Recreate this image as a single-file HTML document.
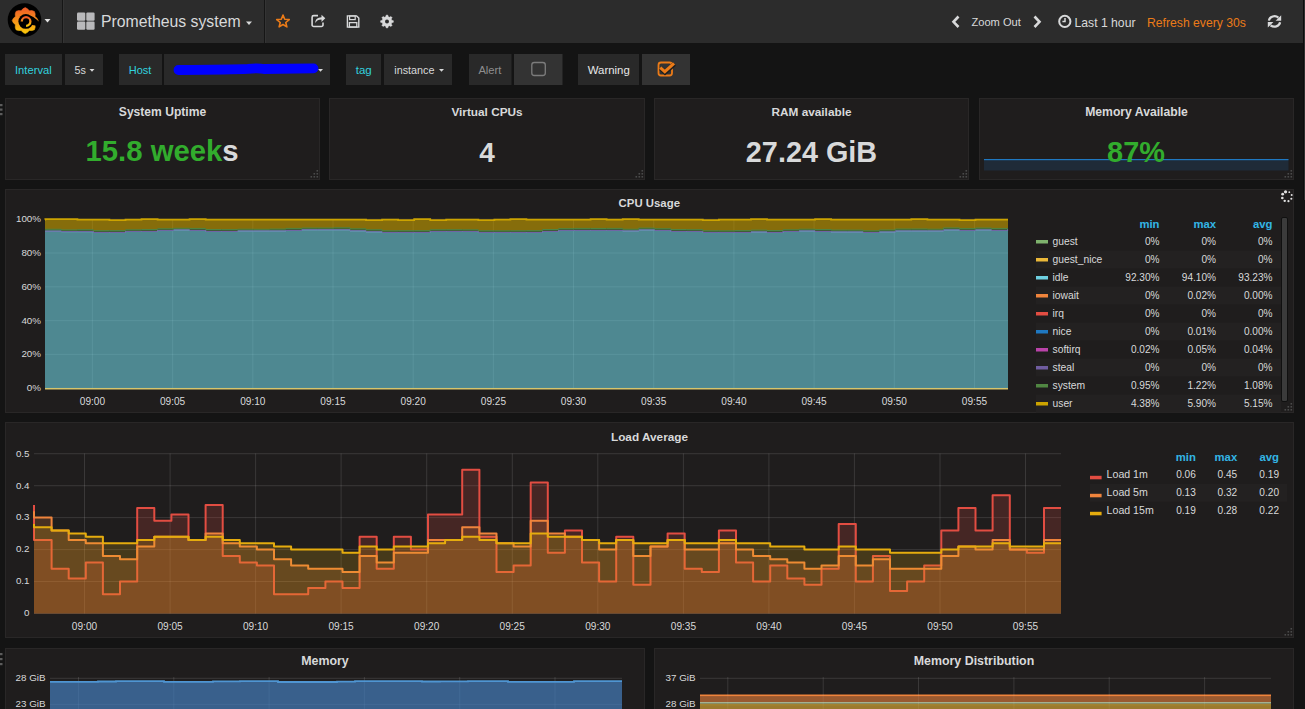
<!DOCTYPE html>
<html><head><meta charset="utf-8"><title>Prometheus system - Grafana</title>
<style>html,body{margin:0;padding:0;background:#161616;width:1305px;height:709px;overflow:hidden}
text{font-family:"Liberation Sans",sans-serif}</style></head>
<body><svg width="1305" height="709" viewBox="0 0 1305 709" font-family="Liberation Sans, sans-serif" style="display:block"><rect x="0" y="0" width="1305" height="709" fill="#141414"/>
<rect x="0" y="0" width="1305" height="43" fill="#2c2c2c"/>
<rect x="62" y="0" width="1" height="43" fill="#161616"/><rect x="63" y="0" width="1" height="43" fill="#343434"/>
<rect x="264" y="0" width="1" height="43" fill="#161616"/><rect x="265" y="0" width="1" height="43" fill="#343434"/>
<circle cx="24.5" cy="20" r="16.8" fill="#000"/>
<defs><linearGradient id="lg" x1="0" y1="0" x2="0" y2="1"><stop offset="0" stop-color="#f05a28"/><stop offset="1" stop-color="#fbca0a"/></linearGradient></defs>
<polygon points="25.20,7.60 27.54,8.83 29.26,10.81 31.87,10.62 34.39,11.41 35.18,13.93 34.99,16.54 36.97,18.26 38.20,20.60 36.97,22.94 34.99,24.66 35.18,27.27 34.39,29.79 31.87,30.58 29.26,30.39 27.54,32.37 25.20,33.60 22.86,32.37 21.14,30.39 18.53,30.58 16.01,29.79 15.22,27.27 15.41,24.66 13.43,22.94 12.20,20.60 13.43,18.26 15.41,16.54 15.22,13.93 16.01,11.41 18.53,10.62 21.14,10.81 22.86,8.83" fill="url(#lg)" stroke="url(#lg)" stroke-width="0.6" stroke-linejoin="round"/>
<circle cx="25.8" cy="21.4" r="7.4" fill="#000"/>
<path d="M29.5 15.2 Q35 17 37.8 20.5 L39 26 L32 25 Z" fill="#000"/>
<path d="M21.8 21.5 a4.3 4.3 0 1 1 4.3 4.3" fill="none" stroke="url(#lg)" stroke-width="2.3"/>
<path d="M44.5 19 L50.5 19 L47.5 22.5 Z" fill="#e3e3e3"/>
<rect x="77" y="12.5" width="8.3" height="8.3" rx="1.2" fill="#b9b9bb"/>
<rect x="86.3" y="12.5" width="8.3" height="8.3" rx="1.2" fill="#b9b9bb"/>
<rect x="77" y="21.5" width="8.3" height="8.3" rx="1.2" fill="#b9b9bb"/>
<rect x="86.3" y="21.5" width="8.3" height="8.3" rx="1.2" fill="#b9b9bb"/>
<text x="101" y="26.7" font-size="15.8" fill="#d8d9da" text-anchor="start" font-weight="normal" >Prometheus system</text>
<path d="M246 21.5 L252 21.5 L249 25 Z" fill="#d8d9da"/>
<polygon points="283.00,15.00 284.70,19.25 289.28,19.56 285.76,22.50 286.88,26.94 283.00,24.50 279.12,26.94 280.24,22.50 276.72,19.56 281.30,19.25" fill="none" stroke="#eb7b18" stroke-width="1.6" stroke-linejoin="round"/>
<path d="M318 15.6 h-4.3 a1.6 1.6 0 0 0 -1.6 1.6 v7.7 a1.6 1.6 0 0 0 1.6 1.6 h7.7 a1.6 1.6 0 0 0 1.6 -1.6 v-2.3" fill="none" stroke="#d8d9da" stroke-width="1.6"/>
<path d="M315.2 23 c0.2-3.6 2.3-5.6 6.3-5.7 v-2.6 l3.8 3.6 -3.8 3.6 v-2.4 c-2.9 0 -4.9 1 -6.3 3.5z" fill="#d8d9da"/>
<path d="M347.4 15.9 h9.2 l2.2 2.2 v9 h-11.4 z" fill="none" stroke="#d8d9da" stroke-width="1.4"/>
<rect x="349.6" y="16" width="5.6" height="3.6" fill="none" stroke="#d8d9da" stroke-width="1.2"/>
<rect x="349.4" y="22.6" width="7.4" height="4.4" fill="none" stroke="#d8d9da" stroke-width="1.3"/>
<polygon points="393.40,21.50 393.35,22.34 391.73,22.77 391.53,23.38 391.24,23.95 392.08,25.40 391.53,26.03 390.90,26.58 389.45,25.74 388.88,26.03 388.27,26.23 387.84,27.85 387.00,27.90 386.16,27.85 385.73,26.23 385.12,26.03 384.55,25.74 383.10,26.58 382.47,26.03 381.92,25.40 382.76,23.95 382.47,23.38 382.27,22.77 380.65,22.34 380.60,21.50 380.65,20.66 382.27,20.23 382.47,19.62 382.76,19.05 381.92,17.60 382.47,16.97 383.10,16.42 384.55,17.26 385.12,16.97 385.73,16.77 386.16,15.15 387.00,15.10 387.84,15.15 388.27,16.77 388.88,16.97 389.45,17.26 390.90,16.42 391.53,16.97 392.08,17.60 391.24,19.05 391.53,19.62 391.73,20.23 393.35,20.66" fill="#d8d9da" stroke="#d8d9da" stroke-width="0.5" stroke-linejoin="round"/>
<circle cx="387" cy="21.5" r="2.0" fill="#2c2c2c"/>
<path d="M958.5 16.5 L953.5 21.8 L958.5 27" fill="none" stroke="#d8d9da" stroke-width="2.6"/>
<text x="971.5" y="26.2" font-size="11.1" fill="#d8d9da" text-anchor="start" font-weight="normal" >Zoom Out</text>
<path d="M1034.5 16.5 L1039.5 21.8 L1034.5 27" fill="none" stroke="#d8d9da" stroke-width="2.6"/>
<circle cx="1064.8" cy="21.4" r="5.6" fill="none" stroke="#d8d9da" stroke-width="2"/>
<path d="M1065 18 v3.6 h-2.6" fill="none" stroke="#d8d9da" stroke-width="1.5"/>
<text x="1074.5" y="26.7" font-size="12.2" fill="#d8d9da" text-anchor="start" font-weight="normal" >Last 1 hour</text>
<text x="1147" y="26.7" font-size="12.2" fill="#eb7b18" text-anchor="start" font-weight="normal" >Refresh every 30s</text>
<path d="M1268.9 20.6 A5.7 5.2 0 0 1 1278.4 17.6" fill="none" stroke="#d8d9da" stroke-width="2.2"/>
<path d="M1281.2 15.2 V20.8 H1275.6 Z" fill="#d8d9da"/>
<path d="M1280.1 22.3 A5.7 5.2 0 0 1 1270.6 25.3" fill="none" stroke="#d8d9da" stroke-width="2.2"/>
<path d="M1267.8 27.6 V22 H1273.4 Z" fill="#d8d9da"/>
<rect x="5" y="54" width="57" height="31" fill="#292929"/>
<text x="15" y="74" font-size="11.2" fill="#32d1df" text-anchor="start" font-weight="normal" >Interval</text>
<rect x="65" y="54" width="38" height="31" fill="#292929"/>
<text x="74.5" y="74" font-size="10.8" fill="#d8d9da" text-anchor="start" font-weight="normal" >5s</text>
<path d="M89.5 69 L94.5 69 L92 71.8 Z" fill="#d8d9da"/>
<rect x="119" y="54" width="43" height="31" fill="#292929"/>
<text x="128.8" y="74" font-size="11" fill="#32d1df" text-anchor="start" font-weight="normal" >Host</text>
<rect x="164" y="54" width="166" height="31" fill="#292929"/>
<path d="M318 69 L323 69 L320.5 71.8 Z" fill="#d8d9da"/>
<path d="M178.5 70 C 205 69.8, 232 69.6, 248 68.9 C 254 68.2, 259 68, 264 69 C 285 68.9, 300 68.5, 313.5 68.4" fill="none" stroke="#0000ff" stroke-width="9.8" stroke-linecap="round"/>
<rect x="346" y="54" width="35" height="31" fill="#292929"/>
<text x="355.7" y="74" font-size="11.5" fill="#32d1df" text-anchor="start" font-weight="normal" >tag</text>
<rect x="384" y="54" width="68" height="31" fill="#292929"/>
<text x="394.3" y="74" font-size="10.8" fill="#d8d9da" text-anchor="start" font-weight="normal" >instance</text>
<path d="M439 69 L444 69 L441.5 71.8 Z" fill="#d8d9da"/>
<rect x="469" y="54" width="42.5" height="31" fill="#292929"/>
<text x="478.4" y="74" font-size="11.2" fill="#8e8e8e" text-anchor="start" font-weight="normal" >Alert</text>
<rect x="514" y="54" width="48.5" height="31" fill="#333333"/>
<rect x="531.8" y="62.5" width="13.5" height="13" rx="2.5" fill="none" stroke="#7c7c7c" stroke-width="1.3"/>
<rect x="578" y="54" width="61" height="31" fill="#292929"/>
<text x="587.8" y="74" font-size="11.4" fill="#e8e8e8" text-anchor="start" font-weight="normal" >Warning</text>
<rect x="642" y="54" width="48" height="31" fill="#333333"/>
<rect x="658.5" y="62.5" width="13.5" height="13" rx="2.5" fill="none" stroke="#eb7b18" stroke-width="1.8"/>
<path d="M660.6 68.4 L665 72.4 L674.4 64" fill="none" stroke="#1e1e1e" stroke-width="4.6"/>
<path d="M660.3 67.6 L664.8 71.6 L674 63.4" fill="none" stroke="#eb7b18" stroke-width="3.1"/>
<rect x="5.5" y="98.5" width="314" height="81" fill="#1f1d1d" stroke="#292727" stroke-width="1"/>
<rect x="316.5" y="176" width="1.6" height="1.6" fill="#4a4a4a"/>
<rect x="313.5" y="176" width="1.6" height="1.6" fill="#4a4a4a"/>
<rect x="310.5" y="176" width="1.6" height="1.6" fill="#4a4a4a"/>
<rect x="316.5" y="173" width="1.6" height="1.6" fill="#4a4a4a"/>
<rect x="313.5" y="173" width="1.6" height="1.6" fill="#4a4a4a"/>
<rect x="316.5" y="170" width="1.6" height="1.6" fill="#4a4a4a"/>
<text x="162.5" y="116" font-size="12.1" fill="#d8d9da" text-anchor="middle" font-weight="bold" >System Uptime</text>
<rect x="329.5" y="98.5" width="315" height="81" fill="#1f1d1d" stroke="#292727" stroke-width="1"/>
<rect x="641.5" y="176" width="1.6" height="1.6" fill="#4a4a4a"/>
<rect x="638.5" y="176" width="1.6" height="1.6" fill="#4a4a4a"/>
<rect x="635.5" y="176" width="1.6" height="1.6" fill="#4a4a4a"/>
<rect x="641.5" y="173" width="1.6" height="1.6" fill="#4a4a4a"/>
<rect x="638.5" y="173" width="1.6" height="1.6" fill="#4a4a4a"/>
<rect x="641.5" y="170" width="1.6" height="1.6" fill="#4a4a4a"/>
<text x="487.0" y="116" font-size="11.8" fill="#d8d9da" text-anchor="middle" font-weight="bold" >Virtual CPUs</text>
<rect x="654.5" y="98.5" width="314" height="81" fill="#1f1d1d" stroke="#292727" stroke-width="1"/>
<rect x="965.5" y="176" width="1.6" height="1.6" fill="#4a4a4a"/>
<rect x="962.5" y="176" width="1.6" height="1.6" fill="#4a4a4a"/>
<rect x="959.5" y="176" width="1.6" height="1.6" fill="#4a4a4a"/>
<rect x="965.5" y="173" width="1.6" height="1.6" fill="#4a4a4a"/>
<rect x="962.5" y="173" width="1.6" height="1.6" fill="#4a4a4a"/>
<rect x="965.5" y="170" width="1.6" height="1.6" fill="#4a4a4a"/>
<text x="811.5" y="116" font-size="11.8" fill="#d8d9da" text-anchor="middle" font-weight="bold" >RAM available</text>
<rect x="979.5" y="98.5" width="314" height="81" fill="#1f1d1d" stroke="#292727" stroke-width="1"/>
<rect x="1290.5" y="176" width="1.6" height="1.6" fill="#4a4a4a"/>
<rect x="1287.5" y="176" width="1.6" height="1.6" fill="#4a4a4a"/>
<rect x="1284.5" y="176" width="1.6" height="1.6" fill="#4a4a4a"/>
<rect x="1290.5" y="173" width="1.6" height="1.6" fill="#4a4a4a"/>
<rect x="1287.5" y="173" width="1.6" height="1.6" fill="#4a4a4a"/>
<rect x="1290.5" y="170" width="1.6" height="1.6" fill="#4a4a4a"/>
<text x="1136.5" y="116" font-size="12.2" fill="#d8d9da" text-anchor="middle" font-weight="bold" >Memory Available</text>
<rect x="984" y="159.5" width="304.5" height="11" fill="#1f2b38"/>
<rect x="984" y="159" width="304.5" height="1.2" fill="#1f78c1"/>
<text x="85.5" y="160.7" font-size="29.3" fill="#d8d9da" text-anchor="start" font-weight="bold" ><tspan fill="#32ac2d">15.8 week</tspan>s</text>
<text x="487" y="161.5" font-size="28" fill="#d8d9da" text-anchor="middle" font-weight="bold" >4</text>
<text x="811.5" y="161.5" font-size="28.8" fill="#d8d9da" text-anchor="middle" font-weight="bold" >27.24 GiB</text>
<text x="1136" y="161.5" font-size="28.9" fill="#32ac2d" text-anchor="middle" font-weight="bold" >87%</text>
<rect x="5.5" y="189.5" width="1288" height="223" fill="#1f1d1d" stroke="#292727" stroke-width="1"/>
<rect x="1290.5" y="409" width="1.6" height="1.6" fill="#4a4a4a"/>
<rect x="1287.5" y="409" width="1.6" height="1.6" fill="#4a4a4a"/>
<rect x="1284.5" y="409" width="1.6" height="1.6" fill="#4a4a4a"/>
<rect x="1290.5" y="406" width="1.6" height="1.6" fill="#4a4a4a"/>
<rect x="1287.5" y="406" width="1.6" height="1.6" fill="#4a4a4a"/>
<rect x="1290.5" y="403" width="1.6" height="1.6" fill="#4a4a4a"/>
<text x="649.3" y="206.6" font-size="11.4" fill="#d8d9da" text-anchor="middle" font-weight="bold" >CPU Usage</text>
<circle cx="1285.55" cy="191.82" r="1.6" fill="#e0e0e0"/>
<circle cx="1289.29" cy="192.17" r="0.9" fill="#e0e0e0"/>
<circle cx="1291.68" cy="195.05" r="1.0" fill="#e0e0e0"/>
<circle cx="1291.33" cy="198.79" r="1.05" fill="#e0e0e0"/>
<circle cx="1288.45" cy="201.18" r="1.1" fill="#e0e0e0"/>
<circle cx="1284.71" cy="200.83" r="1.2" fill="#e0e0e0"/>
<circle cx="1282.32" cy="197.95" r="1.3" fill="#e0e0e0"/>
<circle cx="1282.67" cy="194.21" r="1.4" fill="#e0e0e0"/>
<rect x="45" y="387.7" width="963" height="1" fill="rgba(255,255,255,0.12)"/>
<rect x="45" y="353.9" width="963" height="1" fill="rgba(255,255,255,0.12)"/>
<rect x="45" y="320.1" width="963" height="1" fill="rgba(255,255,255,0.12)"/>
<rect x="45" y="286.3" width="963" height="1" fill="rgba(255,255,255,0.12)"/>
<rect x="45" y="252.5" width="963" height="1" fill="rgba(255,255,255,0.12)"/>
<rect x="45" y="218.7" width="963" height="1" fill="rgba(255,255,255,0.12)"/>
<rect x="91.9" y="219" width="1" height="170" fill="rgba(255,255,255,0.12)"/>
<text x="92.4" y="404.5" font-size="10.1" fill="#d8d9da" text-anchor="middle" font-weight="normal" >09:00</text>
<rect x="172.1" y="219" width="1" height="170" fill="rgba(255,255,255,0.12)"/>
<text x="172.6" y="404.5" font-size="10.1" fill="#d8d9da" text-anchor="middle" font-weight="normal" >09:05</text>
<rect x="252.3" y="219" width="1" height="170" fill="rgba(255,255,255,0.12)"/>
<text x="252.8" y="404.5" font-size="10.1" fill="#d8d9da" text-anchor="middle" font-weight="normal" >09:10</text>
<rect x="332.5" y="219" width="1" height="170" fill="rgba(255,255,255,0.12)"/>
<text x="333.0" y="404.5" font-size="10.1" fill="#d8d9da" text-anchor="middle" font-weight="normal" >09:15</text>
<rect x="412.7" y="219" width="1" height="170" fill="rgba(255,255,255,0.12)"/>
<text x="413.2" y="404.5" font-size="10.1" fill="#d8d9da" text-anchor="middle" font-weight="normal" >09:20</text>
<rect x="492.9" y="219" width="1" height="170" fill="rgba(255,255,255,0.12)"/>
<text x="493.4" y="404.5" font-size="10.1" fill="#d8d9da" text-anchor="middle" font-weight="normal" >09:25</text>
<rect x="573.0" y="219" width="1" height="170" fill="rgba(255,255,255,0.12)"/>
<text x="573.5" y="404.5" font-size="10.1" fill="#d8d9da" text-anchor="middle" font-weight="normal" >09:30</text>
<rect x="653.2" y="219" width="1" height="170" fill="rgba(255,255,255,0.12)"/>
<text x="653.7" y="404.5" font-size="10.1" fill="#d8d9da" text-anchor="middle" font-weight="normal" >09:35</text>
<rect x="733.4" y="219" width="1" height="170" fill="rgba(255,255,255,0.12)"/>
<text x="733.9" y="404.5" font-size="10.1" fill="#d8d9da" text-anchor="middle" font-weight="normal" >09:40</text>
<rect x="813.6" y="219" width="1" height="170" fill="rgba(255,255,255,0.12)"/>
<text x="814.1" y="404.5" font-size="10.1" fill="#d8d9da" text-anchor="middle" font-weight="normal" >09:45</text>
<rect x="893.8" y="219" width="1" height="170" fill="rgba(255,255,255,0.12)"/>
<text x="894.3" y="404.5" font-size="10.1" fill="#d8d9da" text-anchor="middle" font-weight="normal" >09:50</text>
<rect x="974.0" y="219" width="1" height="170" fill="rgba(255,255,255,0.12)"/>
<text x="974.5" y="404.5" font-size="10.1" fill="#d8d9da" text-anchor="middle" font-weight="normal" >09:55</text>
<text x="41" y="391.09999999999997" font-size="9.8" fill="#d8d9da" text-anchor="end" font-weight="normal" >0%</text>
<text x="41" y="357.29999999999995" font-size="9.8" fill="#d8d9da" text-anchor="end" font-weight="normal" >20%</text>
<text x="41" y="323.5" font-size="9.8" fill="#d8d9da" text-anchor="end" font-weight="normal" >40%</text>
<text x="41" y="289.7" font-size="9.8" fill="#d8d9da" text-anchor="end" font-weight="normal" >60%</text>
<text x="41" y="255.9" font-size="9.8" fill="#d8d9da" text-anchor="end" font-weight="normal" >80%</text>
<text x="41" y="222.1" font-size="9.8" fill="#d8d9da" text-anchor="end" font-weight="normal" >100%</text>
<path d="M45.0,231.19 L45.3,231.19 L45.3,231.19 L61.3,231.19 L61.3,231.70 L77.4,231.70 L77.4,231.70 L93.4,231.70 L93.4,232.54 L109.4,232.54 L109.4,232.54 L125.5,232.54 L125.5,231.53 L141.5,231.53 L141.5,231.53 L157.6,231.53 L157.6,230.52 L173.6,230.52 L173.6,230.01 L189.6,230.01 L189.6,230.52 L205.7,230.52 L205.7,231.53 L221.7,231.53 L221.7,231.53 L237.7,231.53 L237.7,231.02 L253.8,231.02 L253.8,231.02 L269.8,231.02 L269.8,231.02 L285.9,231.02 L285.9,230.52 L301.9,230.52 L301.9,229.84 L317.9,229.84 L317.9,229.84 L334.0,229.84 L334.0,229.84 L350.0,229.84 L350.0,230.85 L366.0,230.85 L366.0,231.87 L382.1,231.87 L382.1,232.54 L398.1,232.54 L398.1,232.54 L414.2,232.54 L414.2,232.54 L430.2,232.54 L430.2,231.53 L446.2,231.53 L446.2,231.53 L462.3,231.53 L462.3,231.53 L478.3,231.53 L478.3,232.54 L494.4,232.54 L494.4,232.54 L510.4,232.54 L510.4,232.54 L526.4,232.54 L526.4,232.54 L542.5,232.54 L542.5,231.53 L558.5,231.53 L558.5,230.52 L574.5,230.52 L574.5,230.52 L590.6,230.52 L590.6,230.52 L606.6,230.52 L606.6,230.52 L622.7,230.52 L622.7,231.02 L638.7,231.02 L638.7,230.01 L654.7,230.01 L654.7,230.52 L670.8,230.52 L670.8,231.53 L686.8,231.53 L686.8,231.53 L702.8,231.53 L702.8,232.54 L718.9,232.54 L718.9,232.54 L734.9,232.54 L734.9,232.54 L751.0,232.54 L751.0,232.04 L767.0,232.04 L767.0,232.54 L783.0,232.54 L783.0,231.53 L799.1,231.53 L799.1,231.02 L815.1,231.02 L815.1,231.53 L831.1,231.53 L831.1,232.04 L847.2,232.04 L847.2,232.04 L863.2,232.04 L863.2,232.54 L879.3,232.54 L879.3,232.04 L895.3,232.04 L895.3,231.02 L911.3,231.02 L911.3,231.02 L927.4,231.02 L927.4,231.02 L943.4,231.02 L943.4,230.01 L959.5,230.01 L959.5,230.52 L975.5,230.52 L975.5,230.01 L991.5,230.01 L991.5,230.52 L1007.6,230.52 L1007.6,229.84 L1008.0,229.84 L1008.0,388.70 L1007.6,388.70 L1007.6,388.70 L991.5,388.70 L991.5,388.70 L975.5,388.70 L975.5,388.70 L959.5,388.70 L959.5,388.70 L943.4,388.70 L943.4,388.70 L927.4,388.70 L927.4,388.70 L911.3,388.70 L911.3,388.70 L895.3,388.70 L895.3,388.70 L879.3,388.70 L879.3,388.70 L863.2,388.70 L863.2,388.70 L847.2,388.70 L847.2,388.70 L831.1,388.70 L831.1,388.70 L815.1,388.70 L815.1,388.70 L799.1,388.70 L799.1,388.70 L783.0,388.70 L783.0,388.70 L767.0,388.70 L767.0,388.70 L751.0,388.70 L751.0,388.70 L734.9,388.70 L734.9,388.70 L718.9,388.70 L718.9,388.70 L702.8,388.70 L702.8,388.70 L686.8,388.70 L686.8,388.70 L670.8,388.70 L670.8,388.70 L654.7,388.70 L654.7,388.70 L638.7,388.70 L638.7,388.70 L622.7,388.70 L622.7,388.70 L606.6,388.70 L606.6,388.70 L590.6,388.70 L590.6,388.70 L574.5,388.70 L574.5,388.70 L558.5,388.70 L558.5,388.70 L542.5,388.70 L542.5,388.70 L526.4,388.70 L526.4,388.70 L510.4,388.70 L510.4,388.70 L494.4,388.70 L494.4,388.70 L478.3,388.70 L478.3,388.70 L462.3,388.70 L462.3,388.70 L446.2,388.70 L446.2,388.70 L430.2,388.70 L430.2,388.70 L414.2,388.70 L414.2,388.70 L398.1,388.70 L398.1,388.70 L382.1,388.70 L382.1,388.70 L366.0,388.70 L366.0,388.70 L350.0,388.70 L350.0,388.70 L334.0,388.70 L334.0,388.70 L317.9,388.70 L317.9,388.70 L301.9,388.70 L301.9,388.70 L285.9,388.70 L285.9,388.70 L269.8,388.70 L269.8,388.70 L253.8,388.70 L253.8,388.70 L237.7,388.70 L237.7,388.70 L221.7,388.70 L221.7,388.70 L205.7,388.70 L205.7,388.70 L189.6,388.70 L189.6,388.70 L173.6,388.70 L173.6,388.70 L157.6,388.70 L157.6,388.70 L141.5,388.70 L141.5,388.70 L125.5,388.70 L125.5,388.70 L109.4,388.70 L109.4,388.70 L93.4,388.70 L93.4,388.70 L77.4,388.70 L77.4,388.70 L61.3,388.70 L61.3,388.70 L45.3,388.70 L45.3,388.70 L45.0,388.70 Z" fill="#6ED0E0" fill-opacity="0.6"/>
<path d="M45.0,231.11 L45.3,231.11 L45.3,231.11 L61.3,231.11 L61.3,231.61 L77.4,231.61 L77.4,231.61 L93.4,231.61 L93.4,232.46 L109.4,232.46 L109.4,232.46 L125.5,232.46 L125.5,231.45 L141.5,231.45 L141.5,231.45 L157.6,231.45 L157.6,230.43 L173.6,230.43 L173.6,229.92 L189.6,229.92 L189.6,230.43 L205.7,230.43 L205.7,231.45 L221.7,231.45 L221.7,231.45 L237.7,231.45 L237.7,230.94 L253.8,230.94 L253.8,230.94 L269.8,230.94 L269.8,230.94 L285.9,230.94 L285.9,230.43 L301.9,230.43 L301.9,229.76 L317.9,229.76 L317.9,229.76 L334.0,229.76 L334.0,229.76 L350.0,229.76 L350.0,230.77 L366.0,230.77 L366.0,231.78 L382.1,231.78 L382.1,232.46 L398.1,232.46 L398.1,232.46 L414.2,232.46 L414.2,232.46 L430.2,232.46 L430.2,231.45 L446.2,231.45 L446.2,231.45 L462.3,231.45 L462.3,231.45 L478.3,231.45 L478.3,232.46 L494.4,232.46 L494.4,232.46 L510.4,232.46 L510.4,232.46 L526.4,232.46 L526.4,232.46 L542.5,232.46 L542.5,231.45 L558.5,231.45 L558.5,230.43 L574.5,230.43 L574.5,230.43 L590.6,230.43 L590.6,230.43 L606.6,230.43 L606.6,230.43 L622.7,230.43 L622.7,230.94 L638.7,230.94 L638.7,229.92 L654.7,229.92 L654.7,230.43 L670.8,230.43 L670.8,231.45 L686.8,231.45 L686.8,231.45 L702.8,231.45 L702.8,232.46 L718.9,232.46 L718.9,232.46 L734.9,232.46 L734.9,232.46 L751.0,232.46 L751.0,231.95 L767.0,231.95 L767.0,232.46 L783.0,232.46 L783.0,231.45 L799.1,231.45 L799.1,230.94 L815.1,230.94 L815.1,231.45 L831.1,231.45 L831.1,231.95 L847.2,231.95 L847.2,231.95 L863.2,231.95 L863.2,232.46 L879.3,232.46 L879.3,231.95 L895.3,231.95 L895.3,230.94 L911.3,230.94 L911.3,230.94 L927.4,230.94 L927.4,230.94 L943.4,230.94 L943.4,229.92 L959.5,229.92 L959.5,230.43 L975.5,230.43 L975.5,229.92 L991.5,229.92 L991.5,230.43 L1007.6,230.43 L1007.6,229.76 L1008.0,229.76 L1008.0,229.84 L1007.6,229.84 L1007.6,230.52 L991.5,230.52 L991.5,230.01 L975.5,230.01 L975.5,230.52 L959.5,230.52 L959.5,230.01 L943.4,230.01 L943.4,231.02 L927.4,231.02 L927.4,231.02 L911.3,231.02 L911.3,231.02 L895.3,231.02 L895.3,232.04 L879.3,232.04 L879.3,232.54 L863.2,232.54 L863.2,232.04 L847.2,232.04 L847.2,232.04 L831.1,232.04 L831.1,231.53 L815.1,231.53 L815.1,231.02 L799.1,231.02 L799.1,231.53 L783.0,231.53 L783.0,232.54 L767.0,232.54 L767.0,232.04 L751.0,232.04 L751.0,232.54 L734.9,232.54 L734.9,232.54 L718.9,232.54 L718.9,232.54 L702.8,232.54 L702.8,231.53 L686.8,231.53 L686.8,231.53 L670.8,231.53 L670.8,230.52 L654.7,230.52 L654.7,230.01 L638.7,230.01 L638.7,231.02 L622.7,231.02 L622.7,230.52 L606.6,230.52 L606.6,230.52 L590.6,230.52 L590.6,230.52 L574.5,230.52 L574.5,230.52 L558.5,230.52 L558.5,231.53 L542.5,231.53 L542.5,232.54 L526.4,232.54 L526.4,232.54 L510.4,232.54 L510.4,232.54 L494.4,232.54 L494.4,232.54 L478.3,232.54 L478.3,231.53 L462.3,231.53 L462.3,231.53 L446.2,231.53 L446.2,231.53 L430.2,231.53 L430.2,232.54 L414.2,232.54 L414.2,232.54 L398.1,232.54 L398.1,232.54 L382.1,232.54 L382.1,231.87 L366.0,231.87 L366.0,230.85 L350.0,230.85 L350.0,229.84 L334.0,229.84 L334.0,229.84 L317.9,229.84 L317.9,229.84 L301.9,229.84 L301.9,230.52 L285.9,230.52 L285.9,231.02 L269.8,231.02 L269.8,231.02 L253.8,231.02 L253.8,231.02 L237.7,231.02 L237.7,231.53 L221.7,231.53 L221.7,231.53 L205.7,231.53 L205.7,230.52 L189.6,230.52 L189.6,230.01 L173.6,230.01 L173.6,230.52 L157.6,230.52 L157.6,231.53 L141.5,231.53 L141.5,231.53 L125.5,231.53 L125.5,232.54 L109.4,232.54 L109.4,232.54 L93.4,232.54 L93.4,231.70 L77.4,231.70 L77.4,231.70 L61.3,231.70 L61.3,231.19 L45.3,231.19 L45.3,231.19 L45.0,231.19 Z" fill="#BA43A9" fill-opacity="0.6"/>
<path d="M45.0,229.13 L45.3,229.13 L45.3,229.28 L61.3,229.28 L61.3,229.92 L77.4,229.92 L77.4,229.74 L93.4,229.74 L93.4,230.66 L109.4,230.66 L109.4,230.62 L125.5,230.62 L125.5,229.81 L141.5,229.81 L141.5,229.56 L157.6,229.56 L157.6,228.75 L173.6,228.75 L173.6,228.28 L189.6,228.28 L189.6,228.45 L205.7,228.45 L205.7,229.51 L221.7,229.51 L221.7,229.58 L237.7,229.58 L237.7,229.22 L253.8,229.22 L253.8,229.31 L269.8,229.31 L269.8,229.05 L285.9,229.05 L285.9,228.41 L301.9,228.41 L301.9,228.03 L317.9,228.03 L317.9,228.02 L334.0,228.02 L334.0,227.82 L350.0,227.82 L350.0,228.80 L366.0,228.80 L366.0,229.77 L382.1,229.77 L382.1,230.75 L398.1,230.75 L398.1,230.68 L414.2,230.68 L414.2,230.67 L430.2,230.67 L430.2,229.74 L446.2,229.74 L446.2,229.69 L462.3,229.69 L462.3,229.82 L478.3,229.82 L478.3,230.78 L494.4,230.78 L494.4,230.83 L510.4,230.83 L510.4,230.77 L526.4,230.77 L526.4,230.66 L542.5,230.66 L542.5,229.51 L558.5,229.51 L558.5,228.65 L574.5,228.65 L574.5,228.41 L590.6,228.41 L590.6,228.46 L606.6,228.46 L606.6,228.40 L622.7,228.40 L622.7,229.24 L638.7,229.24 L638.7,228.07 L654.7,228.07 L654.7,228.72 L670.8,228.72 L670.8,229.51 L686.8,229.51 L686.8,229.67 L702.8,229.67 L702.8,230.75 L718.9,230.75 L718.9,230.83 L734.9,230.83 L734.9,230.58 L751.0,230.58 L751.0,230.13 L767.0,230.13 L767.0,230.49 L783.0,230.49 L783.0,229.76 L799.1,229.76 L799.1,229.21 L815.1,229.21 L815.1,229.52 L831.1,229.52 L831.1,230.05 L847.2,230.05 L847.2,230.09 L863.2,230.09 L863.2,230.79 L879.3,230.79 L879.3,229.94 L895.3,229.94 L895.3,229.03 L911.3,229.03 L911.3,228.98 L927.4,228.98 L927.4,229.20 L943.4,229.20 L943.4,227.91 L959.5,227.91 L959.5,228.61 L975.5,228.61 L975.5,228.05 L991.5,228.05 L991.5,228.44 L1007.6,228.44 L1007.6,228.13 L1008.0,228.13 L1008.0,229.76 L1007.6,229.76 L1007.6,230.43 L991.5,230.43 L991.5,229.92 L975.5,229.92 L975.5,230.43 L959.5,230.43 L959.5,229.92 L943.4,229.92 L943.4,230.94 L927.4,230.94 L927.4,230.94 L911.3,230.94 L911.3,230.94 L895.3,230.94 L895.3,231.95 L879.3,231.95 L879.3,232.46 L863.2,232.46 L863.2,231.95 L847.2,231.95 L847.2,231.95 L831.1,231.95 L831.1,231.45 L815.1,231.45 L815.1,230.94 L799.1,230.94 L799.1,231.45 L783.0,231.45 L783.0,232.46 L767.0,232.46 L767.0,231.95 L751.0,231.95 L751.0,232.46 L734.9,232.46 L734.9,232.46 L718.9,232.46 L718.9,232.46 L702.8,232.46 L702.8,231.45 L686.8,231.45 L686.8,231.45 L670.8,231.45 L670.8,230.43 L654.7,230.43 L654.7,229.92 L638.7,229.92 L638.7,230.94 L622.7,230.94 L622.7,230.43 L606.6,230.43 L606.6,230.43 L590.6,230.43 L590.6,230.43 L574.5,230.43 L574.5,230.43 L558.5,230.43 L558.5,231.45 L542.5,231.45 L542.5,232.46 L526.4,232.46 L526.4,232.46 L510.4,232.46 L510.4,232.46 L494.4,232.46 L494.4,232.46 L478.3,232.46 L478.3,231.45 L462.3,231.45 L462.3,231.45 L446.2,231.45 L446.2,231.45 L430.2,231.45 L430.2,232.46 L414.2,232.46 L414.2,232.46 L398.1,232.46 L398.1,232.46 L382.1,232.46 L382.1,231.78 L366.0,231.78 L366.0,230.77 L350.0,230.77 L350.0,229.76 L334.0,229.76 L334.0,229.76 L317.9,229.76 L317.9,229.76 L301.9,229.76 L301.9,230.43 L285.9,230.43 L285.9,230.94 L269.8,230.94 L269.8,230.94 L253.8,230.94 L253.8,230.94 L237.7,230.94 L237.7,231.45 L221.7,231.45 L221.7,231.45 L205.7,231.45 L205.7,230.43 L189.6,230.43 L189.6,229.92 L173.6,229.92 L173.6,230.43 L157.6,230.43 L157.6,231.45 L141.5,231.45 L141.5,231.45 L125.5,231.45 L125.5,232.46 L109.4,232.46 L109.4,232.46 L93.4,232.46 L93.4,231.61 L77.4,231.61 L77.4,231.61 L61.3,231.61 L61.3,231.11 L45.3,231.11 L45.3,231.11 L45.0,231.11 Z" fill="#508642" fill-opacity="0.6"/>
<path d="M45.0,219.70 L45.3,219.70 L45.3,219.11 L61.3,219.11 L61.3,219.11 L77.4,219.11 L77.4,219.70 L93.4,219.70 L93.4,219.70 L109.4,219.70 L109.4,220.21 L125.5,220.21 L125.5,219.70 L141.5,219.70 L141.5,219.11 L157.6,219.11 L157.6,219.70 L173.6,219.70 L173.6,219.70 L189.6,219.70 L189.6,219.11 L205.7,219.11 L205.7,219.70 L221.7,219.70 L221.7,219.70 L237.7,219.70 L237.7,219.70 L253.8,219.70 L253.8,219.70 L269.8,219.70 L269.8,219.70 L285.9,219.70 L285.9,219.70 L301.9,219.70 L301.9,219.70 L317.9,219.70 L317.9,219.70 L334.0,219.70 L334.0,219.70 L350.0,219.70 L350.0,219.70 L366.0,219.70 L366.0,220.21 L382.1,220.21 L382.1,219.70 L398.1,219.70 L398.1,220.21 L414.2,220.21 L414.2,219.11 L430.2,219.11 L430.2,220.21 L446.2,220.21 L446.2,219.70 L462.3,219.70 L462.3,219.70 L478.3,219.70 L478.3,220.21 L494.4,220.21 L494.4,219.70 L510.4,219.70 L510.4,219.11 L526.4,219.11 L526.4,219.70 L542.5,219.70 L542.5,219.70 L558.5,219.70 L558.5,219.70 L574.5,219.70 L574.5,219.70 L590.6,219.70 L590.6,219.11 L606.6,219.11 L606.6,219.70 L622.7,219.70 L622.7,219.11 L638.7,219.11 L638.7,219.70 L654.7,219.70 L654.7,219.70 L670.8,219.70 L670.8,219.70 L686.8,219.70 L686.8,219.70 L702.8,219.70 L702.8,220.21 L718.9,220.21 L718.9,219.70 L734.9,219.70 L734.9,219.70 L751.0,219.70 L751.0,219.11 L767.0,219.11 L767.0,219.70 L783.0,219.70 L783.0,219.70 L799.1,219.70 L799.1,219.70 L815.1,219.70 L815.1,219.11 L831.1,219.11 L831.1,219.70 L847.2,219.70 L847.2,219.70 L863.2,219.70 L863.2,219.70 L879.3,219.70 L879.3,219.70 L895.3,219.70 L895.3,219.70 L911.3,219.70 L911.3,219.11 L927.4,219.11 L927.4,219.70 L943.4,219.70 L943.4,219.70 L959.5,219.70 L959.5,220.21 L975.5,220.21 L975.5,219.70 L991.5,219.70 L991.5,219.70 L1007.6,219.70 L1007.6,219.70 L1008.0,219.70 L1008.0,228.13 L1007.6,228.13 L1007.6,228.44 L991.5,228.44 L991.5,228.05 L975.5,228.05 L975.5,228.61 L959.5,228.61 L959.5,227.91 L943.4,227.91 L943.4,229.20 L927.4,229.20 L927.4,228.98 L911.3,228.98 L911.3,229.03 L895.3,229.03 L895.3,229.94 L879.3,229.94 L879.3,230.79 L863.2,230.79 L863.2,230.09 L847.2,230.09 L847.2,230.05 L831.1,230.05 L831.1,229.52 L815.1,229.52 L815.1,229.21 L799.1,229.21 L799.1,229.76 L783.0,229.76 L783.0,230.49 L767.0,230.49 L767.0,230.13 L751.0,230.13 L751.0,230.58 L734.9,230.58 L734.9,230.83 L718.9,230.83 L718.9,230.75 L702.8,230.75 L702.8,229.67 L686.8,229.67 L686.8,229.51 L670.8,229.51 L670.8,228.72 L654.7,228.72 L654.7,228.07 L638.7,228.07 L638.7,229.24 L622.7,229.24 L622.7,228.40 L606.6,228.40 L606.6,228.46 L590.6,228.46 L590.6,228.41 L574.5,228.41 L574.5,228.65 L558.5,228.65 L558.5,229.51 L542.5,229.51 L542.5,230.66 L526.4,230.66 L526.4,230.77 L510.4,230.77 L510.4,230.83 L494.4,230.83 L494.4,230.78 L478.3,230.78 L478.3,229.82 L462.3,229.82 L462.3,229.69 L446.2,229.69 L446.2,229.74 L430.2,229.74 L430.2,230.67 L414.2,230.67 L414.2,230.68 L398.1,230.68 L398.1,230.75 L382.1,230.75 L382.1,229.77 L366.0,229.77 L366.0,228.80 L350.0,228.80 L350.0,227.82 L334.0,227.82 L334.0,228.02 L317.9,228.02 L317.9,228.03 L301.9,228.03 L301.9,228.41 L285.9,228.41 L285.9,229.05 L269.8,229.05 L269.8,229.31 L253.8,229.31 L253.8,229.22 L237.7,229.22 L237.7,229.58 L221.7,229.58 L221.7,229.51 L205.7,229.51 L205.7,228.45 L189.6,228.45 L189.6,228.28 L173.6,228.28 L173.6,228.75 L157.6,228.75 L157.6,229.56 L141.5,229.56 L141.5,229.81 L125.5,229.81 L125.5,230.62 L109.4,230.62 L109.4,230.66 L93.4,230.66 L93.4,229.74 L77.4,229.74 L77.4,229.92 L61.3,229.92 L61.3,229.28 L45.3,229.28 L45.3,229.13 L45.0,229.13 Z" fill="#CCA300" fill-opacity="0.6"/>
<path d="M45.0,388.70 L45.3,388.70 L45.3,388.70 L61.3,388.70 L61.3,388.70 L77.4,388.70 L77.4,388.70 L93.4,388.70 L93.4,388.70 L109.4,388.70 L109.4,388.70 L125.5,388.70 L125.5,388.70 L141.5,388.70 L141.5,388.70 L157.6,388.70 L157.6,388.70 L173.6,388.70 L173.6,388.70 L189.6,388.70 L189.6,388.70 L205.7,388.70 L205.7,388.70 L221.7,388.70 L221.7,388.70 L237.7,388.70 L237.7,388.70 L253.8,388.70 L253.8,388.70 L269.8,388.70 L269.8,388.70 L285.9,388.70 L285.9,388.70 L301.9,388.70 L301.9,388.70 L317.9,388.70 L317.9,388.70 L334.0,388.70 L334.0,388.70 L350.0,388.70 L350.0,388.70 L366.0,388.70 L366.0,388.70 L382.1,388.70 L382.1,388.70 L398.1,388.70 L398.1,388.70 L414.2,388.70 L414.2,388.70 L430.2,388.70 L430.2,388.70 L446.2,388.70 L446.2,388.70 L462.3,388.70 L462.3,388.70 L478.3,388.70 L478.3,388.70 L494.4,388.70 L494.4,388.70 L510.4,388.70 L510.4,388.70 L526.4,388.70 L526.4,388.70 L542.5,388.70 L542.5,388.70 L558.5,388.70 L558.5,388.70 L574.5,388.70 L574.5,388.70 L590.6,388.70 L590.6,388.70 L606.6,388.70 L606.6,388.70 L622.7,388.70 L622.7,388.70 L638.7,388.70 L638.7,388.70 L654.7,388.70 L654.7,388.70 L670.8,388.70 L670.8,388.70 L686.8,388.70 L686.8,388.70 L702.8,388.70 L702.8,388.70 L718.9,388.70 L718.9,388.70 L734.9,388.70 L734.9,388.70 L751.0,388.70 L751.0,388.70 L767.0,388.70 L767.0,388.70 L783.0,388.70 L783.0,388.70 L799.1,388.70 L799.1,388.70 L815.1,388.70 L815.1,388.70 L831.1,388.70 L831.1,388.70 L847.2,388.70 L847.2,388.70 L863.2,388.70 L863.2,388.70 L879.3,388.70 L879.3,388.70 L895.3,388.70 L895.3,388.70 L911.3,388.70 L911.3,388.70 L927.4,388.70 L927.4,388.70 L943.4,388.70 L943.4,388.70 L959.5,388.70 L959.5,388.70 L975.5,388.70 L975.5,388.70 L991.5,388.70 L991.5,388.70 L1007.6,388.70 L1007.6,388.70 L1008.0,388.70" fill="none" stroke="#d6c46c" stroke-width="1.6"/>
<path d="M45.0,231.19 L45.3,231.19 L45.3,231.19 L61.3,231.19 L61.3,231.70 L77.4,231.70 L77.4,231.70 L93.4,231.70 L93.4,232.54 L109.4,232.54 L109.4,232.54 L125.5,232.54 L125.5,231.53 L141.5,231.53 L141.5,231.53 L157.6,231.53 L157.6,230.52 L173.6,230.52 L173.6,230.01 L189.6,230.01 L189.6,230.52 L205.7,230.52 L205.7,231.53 L221.7,231.53 L221.7,231.53 L237.7,231.53 L237.7,231.02 L253.8,231.02 L253.8,231.02 L269.8,231.02 L269.8,231.02 L285.9,231.02 L285.9,230.52 L301.9,230.52 L301.9,229.84 L317.9,229.84 L317.9,229.84 L334.0,229.84 L334.0,229.84 L350.0,229.84 L350.0,230.85 L366.0,230.85 L366.0,231.87 L382.1,231.87 L382.1,232.54 L398.1,232.54 L398.1,232.54 L414.2,232.54 L414.2,232.54 L430.2,232.54 L430.2,231.53 L446.2,231.53 L446.2,231.53 L462.3,231.53 L462.3,231.53 L478.3,231.53 L478.3,232.54 L494.4,232.54 L494.4,232.54 L510.4,232.54 L510.4,232.54 L526.4,232.54 L526.4,232.54 L542.5,232.54 L542.5,231.53 L558.5,231.53 L558.5,230.52 L574.5,230.52 L574.5,230.52 L590.6,230.52 L590.6,230.52 L606.6,230.52 L606.6,230.52 L622.7,230.52 L622.7,231.02 L638.7,231.02 L638.7,230.01 L654.7,230.01 L654.7,230.52 L670.8,230.52 L670.8,231.53 L686.8,231.53 L686.8,231.53 L702.8,231.53 L702.8,232.54 L718.9,232.54 L718.9,232.54 L734.9,232.54 L734.9,232.54 L751.0,232.54 L751.0,232.04 L767.0,232.04 L767.0,232.54 L783.0,232.54 L783.0,231.53 L799.1,231.53 L799.1,231.02 L815.1,231.02 L815.1,231.53 L831.1,231.53 L831.1,232.04 L847.2,232.04 L847.2,232.04 L863.2,232.04 L863.2,232.54 L879.3,232.54 L879.3,232.04 L895.3,232.04 L895.3,231.02 L911.3,231.02 L911.3,231.02 L927.4,231.02 L927.4,231.02 L943.4,231.02 L943.4,230.01 L959.5,230.01 L959.5,230.52 L975.5,230.52 L975.5,230.01 L991.5,230.01 L991.5,230.52 L1007.6,230.52 L1007.6,229.84 L1008.0,229.84" fill="none" stroke="#6ED0E0" stroke-width="1"/>
<path d="M45.0,231.11 L45.3,231.11 L45.3,231.11 L61.3,231.11 L61.3,231.61 L77.4,231.61 L77.4,231.61 L93.4,231.61 L93.4,232.46 L109.4,232.46 L109.4,232.46 L125.5,232.46 L125.5,231.45 L141.5,231.45 L141.5,231.45 L157.6,231.45 L157.6,230.43 L173.6,230.43 L173.6,229.92 L189.6,229.92 L189.6,230.43 L205.7,230.43 L205.7,231.45 L221.7,231.45 L221.7,231.45 L237.7,231.45 L237.7,230.94 L253.8,230.94 L253.8,230.94 L269.8,230.94 L269.8,230.94 L285.9,230.94 L285.9,230.43 L301.9,230.43 L301.9,229.76 L317.9,229.76 L317.9,229.76 L334.0,229.76 L334.0,229.76 L350.0,229.76 L350.0,230.77 L366.0,230.77 L366.0,231.78 L382.1,231.78 L382.1,232.46 L398.1,232.46 L398.1,232.46 L414.2,232.46 L414.2,232.46 L430.2,232.46 L430.2,231.45 L446.2,231.45 L446.2,231.45 L462.3,231.45 L462.3,231.45 L478.3,231.45 L478.3,232.46 L494.4,232.46 L494.4,232.46 L510.4,232.46 L510.4,232.46 L526.4,232.46 L526.4,232.46 L542.5,232.46 L542.5,231.45 L558.5,231.45 L558.5,230.43 L574.5,230.43 L574.5,230.43 L590.6,230.43 L590.6,230.43 L606.6,230.43 L606.6,230.43 L622.7,230.43 L622.7,230.94 L638.7,230.94 L638.7,229.92 L654.7,229.92 L654.7,230.43 L670.8,230.43 L670.8,231.45 L686.8,231.45 L686.8,231.45 L702.8,231.45 L702.8,232.46 L718.9,232.46 L718.9,232.46 L734.9,232.46 L734.9,232.46 L751.0,232.46 L751.0,231.95 L767.0,231.95 L767.0,232.46 L783.0,232.46 L783.0,231.45 L799.1,231.45 L799.1,230.94 L815.1,230.94 L815.1,231.45 L831.1,231.45 L831.1,231.95 L847.2,231.95 L847.2,231.95 L863.2,231.95 L863.2,232.46 L879.3,232.46 L879.3,231.95 L895.3,231.95 L895.3,230.94 L911.3,230.94 L911.3,230.94 L927.4,230.94 L927.4,230.94 L943.4,230.94 L943.4,229.92 L959.5,229.92 L959.5,230.43 L975.5,230.43 L975.5,229.92 L991.5,229.92 L991.5,230.43 L1007.6,230.43 L1007.6,229.76 L1008.0,229.76" fill="none" stroke="#705DA0" stroke-width="1"/>
<path d="M45.0,229.13 L45.3,229.13 L45.3,229.28 L61.3,229.28 L61.3,229.92 L77.4,229.92 L77.4,229.74 L93.4,229.74 L93.4,230.66 L109.4,230.66 L109.4,230.62 L125.5,230.62 L125.5,229.81 L141.5,229.81 L141.5,229.56 L157.6,229.56 L157.6,228.75 L173.6,228.75 L173.6,228.28 L189.6,228.28 L189.6,228.45 L205.7,228.45 L205.7,229.51 L221.7,229.51 L221.7,229.58 L237.7,229.58 L237.7,229.22 L253.8,229.22 L253.8,229.31 L269.8,229.31 L269.8,229.05 L285.9,229.05 L285.9,228.41 L301.9,228.41 L301.9,228.03 L317.9,228.03 L317.9,228.02 L334.0,228.02 L334.0,227.82 L350.0,227.82 L350.0,228.80 L366.0,228.80 L366.0,229.77 L382.1,229.77 L382.1,230.75 L398.1,230.75 L398.1,230.68 L414.2,230.68 L414.2,230.67 L430.2,230.67 L430.2,229.74 L446.2,229.74 L446.2,229.69 L462.3,229.69 L462.3,229.82 L478.3,229.82 L478.3,230.78 L494.4,230.78 L494.4,230.83 L510.4,230.83 L510.4,230.77 L526.4,230.77 L526.4,230.66 L542.5,230.66 L542.5,229.51 L558.5,229.51 L558.5,228.65 L574.5,228.65 L574.5,228.41 L590.6,228.41 L590.6,228.46 L606.6,228.46 L606.6,228.40 L622.7,228.40 L622.7,229.24 L638.7,229.24 L638.7,228.07 L654.7,228.07 L654.7,228.72 L670.8,228.72 L670.8,229.51 L686.8,229.51 L686.8,229.67 L702.8,229.67 L702.8,230.75 L718.9,230.75 L718.9,230.83 L734.9,230.83 L734.9,230.58 L751.0,230.58 L751.0,230.13 L767.0,230.13 L767.0,230.49 L783.0,230.49 L783.0,229.76 L799.1,229.76 L799.1,229.21 L815.1,229.21 L815.1,229.52 L831.1,229.52 L831.1,230.05 L847.2,230.05 L847.2,230.09 L863.2,230.09 L863.2,230.79 L879.3,230.79 L879.3,229.94 L895.3,229.94 L895.3,229.03 L911.3,229.03 L911.3,228.98 L927.4,228.98 L927.4,229.20 L943.4,229.20 L943.4,227.91 L959.5,227.91 L959.5,228.61 L975.5,228.61 L975.5,228.05 L991.5,228.05 L991.5,228.44 L1007.6,228.44 L1007.6,228.13 L1008.0,228.13" fill="none" stroke="#508642" stroke-width="1"/>
<path d="M45.0,219.70 L45.3,219.70 L45.3,219.11 L61.3,219.11 L61.3,219.11 L77.4,219.11 L77.4,219.70 L93.4,219.70 L93.4,219.70 L109.4,219.70 L109.4,220.21 L125.5,220.21 L125.5,219.70 L141.5,219.70 L141.5,219.11 L157.6,219.11 L157.6,219.70 L173.6,219.70 L173.6,219.70 L189.6,219.70 L189.6,219.11 L205.7,219.11 L205.7,219.70 L221.7,219.70 L221.7,219.70 L237.7,219.70 L237.7,219.70 L253.8,219.70 L253.8,219.70 L269.8,219.70 L269.8,219.70 L285.9,219.70 L285.9,219.70 L301.9,219.70 L301.9,219.70 L317.9,219.70 L317.9,219.70 L334.0,219.70 L334.0,219.70 L350.0,219.70 L350.0,219.70 L366.0,219.70 L366.0,220.21 L382.1,220.21 L382.1,219.70 L398.1,219.70 L398.1,220.21 L414.2,220.21 L414.2,219.11 L430.2,219.11 L430.2,220.21 L446.2,220.21 L446.2,219.70 L462.3,219.70 L462.3,219.70 L478.3,219.70 L478.3,220.21 L494.4,220.21 L494.4,219.70 L510.4,219.70 L510.4,219.11 L526.4,219.11 L526.4,219.70 L542.5,219.70 L542.5,219.70 L558.5,219.70 L558.5,219.70 L574.5,219.70 L574.5,219.70 L590.6,219.70 L590.6,219.11 L606.6,219.11 L606.6,219.70 L622.7,219.70 L622.7,219.11 L638.7,219.11 L638.7,219.70 L654.7,219.70 L654.7,219.70 L670.8,219.70 L670.8,219.70 L686.8,219.70 L686.8,219.70 L702.8,219.70 L702.8,220.21 L718.9,220.21 L718.9,219.70 L734.9,219.70 L734.9,219.70 L751.0,219.70 L751.0,219.11 L767.0,219.11 L767.0,219.70 L783.0,219.70 L783.0,219.70 L799.1,219.70 L799.1,219.70 L815.1,219.70 L815.1,219.11 L831.1,219.11 L831.1,219.70 L847.2,219.70 L847.2,219.70 L863.2,219.70 L863.2,219.70 L879.3,219.70 L879.3,219.70 L895.3,219.70 L895.3,219.70 L911.3,219.70 L911.3,219.11 L927.4,219.11 L927.4,219.70 L943.4,219.70 L943.4,219.70 L959.5,219.70 L959.5,220.21 L975.5,220.21 L975.5,219.70 L991.5,219.70 L991.5,219.70 L1007.6,219.70 L1007.6,219.70 L1008.0,219.70" fill="none" stroke="#CCA300" stroke-width="1.8"/>
<text x="1159.5" y="228" font-size="11.3" fill="#33b5e5" text-anchor="end" font-weight="bold" >min</text>
<text x="1216" y="228" font-size="11.3" fill="#33b5e5" text-anchor="end" font-weight="bold" >max</text>
<text x="1272.5" y="228" font-size="11.3" fill="#33b5e5" text-anchor="end" font-weight="bold" >avg</text>
<rect x="1036" y="240.0" width="12" height="3.5" fill="#7EB26D"/>
<text x="1052.5" y="244.7" font-size="10.3" fill="#d8d9da" text-anchor="start" font-weight="normal" >guest</text>
<text x="1159.5" y="244.7" font-size="10.1" fill="#d8d9da" text-anchor="end" font-weight="normal" >0%</text>
<text x="1216" y="244.7" font-size="10.1" fill="#d8d9da" text-anchor="end" font-weight="normal" >0%</text>
<text x="1272.5" y="244.7" font-size="10.1" fill="#d8d9da" text-anchor="end" font-weight="normal" >0%</text>
<rect x="1036" y="250.5" width="245" height="18" fill="#232121"/>
<rect x="1036" y="258.0" width="12" height="3.5" fill="#EAB839"/>
<text x="1052.5" y="262.7" font-size="10.3" fill="#d8d9da" text-anchor="start" font-weight="normal" >guest_nice</text>
<text x="1159.5" y="262.7" font-size="10.1" fill="#d8d9da" text-anchor="end" font-weight="normal" >0%</text>
<text x="1216" y="262.7" font-size="10.1" fill="#d8d9da" text-anchor="end" font-weight="normal" >0%</text>
<text x="1272.5" y="262.7" font-size="10.1" fill="#d8d9da" text-anchor="end" font-weight="normal" >0%</text>
<rect x="1036" y="276.0" width="12" height="3.5" fill="#6ED0E0"/>
<text x="1052.5" y="280.7" font-size="10.3" fill="#d8d9da" text-anchor="start" font-weight="normal" >idle</text>
<text x="1159.5" y="280.7" font-size="10.1" fill="#d8d9da" text-anchor="end" font-weight="normal" >92.30%</text>
<text x="1216" y="280.7" font-size="10.1" fill="#d8d9da" text-anchor="end" font-weight="normal" >94.10%</text>
<text x="1272.5" y="280.7" font-size="10.1" fill="#d8d9da" text-anchor="end" font-weight="normal" >93.23%</text>
<rect x="1036" y="286.5" width="245" height="18" fill="#232121"/>
<rect x="1036" y="294.0" width="12" height="3.5" fill="#EF843C"/>
<text x="1052.5" y="298.7" font-size="10.3" fill="#d8d9da" text-anchor="start" font-weight="normal" >iowait</text>
<text x="1159.5" y="298.7" font-size="10.1" fill="#d8d9da" text-anchor="end" font-weight="normal" >0%</text>
<text x="1216" y="298.7" font-size="10.1" fill="#d8d9da" text-anchor="end" font-weight="normal" >0.02%</text>
<text x="1272.5" y="298.7" font-size="10.1" fill="#d8d9da" text-anchor="end" font-weight="normal" >0.00%</text>
<rect x="1036" y="312.0" width="12" height="3.5" fill="#E24D42"/>
<text x="1052.5" y="316.7" font-size="10.3" fill="#d8d9da" text-anchor="start" font-weight="normal" >irq</text>
<text x="1159.5" y="316.7" font-size="10.1" fill="#d8d9da" text-anchor="end" font-weight="normal" >0%</text>
<text x="1216" y="316.7" font-size="10.1" fill="#d8d9da" text-anchor="end" font-weight="normal" >0%</text>
<text x="1272.5" y="316.7" font-size="10.1" fill="#d8d9da" text-anchor="end" font-weight="normal" >0%</text>
<rect x="1036" y="322.5" width="245" height="18" fill="#232121"/>
<rect x="1036" y="330.0" width="12" height="3.5" fill="#1F78C1"/>
<text x="1052.5" y="334.7" font-size="10.3" fill="#d8d9da" text-anchor="start" font-weight="normal" >nice</text>
<text x="1159.5" y="334.7" font-size="10.1" fill="#d8d9da" text-anchor="end" font-weight="normal" >0%</text>
<text x="1216" y="334.7" font-size="10.1" fill="#d8d9da" text-anchor="end" font-weight="normal" >0.01%</text>
<text x="1272.5" y="334.7" font-size="10.1" fill="#d8d9da" text-anchor="end" font-weight="normal" >0.00%</text>
<rect x="1036" y="348.0" width="12" height="3.5" fill="#BA43A9"/>
<text x="1052.5" y="352.7" font-size="10.3" fill="#d8d9da" text-anchor="start" font-weight="normal" >softirq</text>
<text x="1159.5" y="352.7" font-size="10.1" fill="#d8d9da" text-anchor="end" font-weight="normal" >0.02%</text>
<text x="1216" y="352.7" font-size="10.1" fill="#d8d9da" text-anchor="end" font-weight="normal" >0.05%</text>
<text x="1272.5" y="352.7" font-size="10.1" fill="#d8d9da" text-anchor="end" font-weight="normal" >0.04%</text>
<rect x="1036" y="358.5" width="245" height="18" fill="#232121"/>
<rect x="1036" y="366.0" width="12" height="3.5" fill="#705DA0"/>
<text x="1052.5" y="370.7" font-size="10.3" fill="#d8d9da" text-anchor="start" font-weight="normal" >steal</text>
<text x="1159.5" y="370.7" font-size="10.1" fill="#d8d9da" text-anchor="end" font-weight="normal" >0%</text>
<text x="1216" y="370.7" font-size="10.1" fill="#d8d9da" text-anchor="end" font-weight="normal" >0%</text>
<text x="1272.5" y="370.7" font-size="10.1" fill="#d8d9da" text-anchor="end" font-weight="normal" >0%</text>
<rect x="1036" y="384.0" width="12" height="3.5" fill="#508642"/>
<text x="1052.5" y="388.7" font-size="10.3" fill="#d8d9da" text-anchor="start" font-weight="normal" >system</text>
<text x="1159.5" y="388.7" font-size="10.1" fill="#d8d9da" text-anchor="end" font-weight="normal" >0.95%</text>
<text x="1216" y="388.7" font-size="10.1" fill="#d8d9da" text-anchor="end" font-weight="normal" >1.22%</text>
<text x="1272.5" y="388.7" font-size="10.1" fill="#d8d9da" text-anchor="end" font-weight="normal" >1.08%</text>
<rect x="1036" y="394.5" width="245" height="18" fill="#232121"/>
<rect x="1036" y="402.0" width="12" height="3.5" fill="#CCA300"/>
<text x="1052.5" y="406.7" font-size="10.3" fill="#d8d9da" text-anchor="start" font-weight="normal" >user</text>
<text x="1159.5" y="406.7" font-size="10.1" fill="#d8d9da" text-anchor="end" font-weight="normal" >4.38%</text>
<text x="1216" y="406.7" font-size="10.1" fill="#d8d9da" text-anchor="end" font-weight="normal" >5.90%</text>
<text x="1272.5" y="406.7" font-size="10.1" fill="#d8d9da" text-anchor="end" font-weight="normal" >5.15%</text>
<rect x="1281.5" y="217.5" width="6" height="184" rx="1.5" fill="#3b3b3b" stroke="#101010" stroke-width="1"/>
<rect x="5.5" y="422.5" width="1288" height="215" fill="#1f1d1d" stroke="#292727" stroke-width="1"/>
<rect x="1290.5" y="634" width="1.6" height="1.6" fill="#4a4a4a"/>
<rect x="1287.5" y="634" width="1.6" height="1.6" fill="#4a4a4a"/>
<rect x="1284.5" y="634" width="1.6" height="1.6" fill="#4a4a4a"/>
<rect x="1290.5" y="631" width="1.6" height="1.6" fill="#4a4a4a"/>
<rect x="1287.5" y="631" width="1.6" height="1.6" fill="#4a4a4a"/>
<rect x="1290.5" y="628" width="1.6" height="1.6" fill="#4a4a4a"/>
<text x="649.5" y="440.8" font-size="11.8" fill="#d8d9da" text-anchor="middle" font-weight="bold" >Load Average</text>
<rect x="34" y="613.0" width="1027" height="1" fill="rgba(255,255,255,0.12)"/>
<text x="29.5" y="616.3" font-size="9.8" fill="#d8d9da" text-anchor="end" font-weight="normal" >0</text>
<rect x="34" y="581.0" width="1027" height="1" fill="rgba(255,255,255,0.12)"/>
<text x="29.5" y="584.3499999999999" font-size="9.8" fill="#d8d9da" text-anchor="end" font-weight="normal" >0.1</text>
<rect x="34" y="549.1" width="1027" height="1" fill="rgba(255,255,255,0.12)"/>
<text x="29.5" y="552.4" font-size="9.8" fill="#d8d9da" text-anchor="end" font-weight="normal" >0.2</text>
<rect x="34" y="517.1" width="1027" height="1" fill="rgba(255,255,255,0.12)"/>
<text x="29.5" y="520.4499999999999" font-size="9.8" fill="#d8d9da" text-anchor="end" font-weight="normal" >0.3</text>
<rect x="34" y="485.2" width="1027" height="1" fill="rgba(255,255,255,0.12)"/>
<text x="29.5" y="488.5" font-size="9.8" fill="#d8d9da" text-anchor="end" font-weight="normal" >0.4</text>
<rect x="34" y="453.2" width="1027" height="1" fill="rgba(255,255,255,0.12)"/>
<text x="29.5" y="456.55" font-size="9.8" fill="#d8d9da" text-anchor="end" font-weight="normal" >0.5</text>
<rect x="84.0" y="453.5" width="1" height="160" fill="rgba(255,255,255,0.12)"/>
<text x="84.5" y="629.5" font-size="10.1" fill="#d8d9da" text-anchor="middle" font-weight="normal" >09:00</text>
<rect x="169.6" y="453.5" width="1" height="160" fill="rgba(255,255,255,0.12)"/>
<text x="170.1" y="629.5" font-size="10.1" fill="#d8d9da" text-anchor="middle" font-weight="normal" >09:05</text>
<rect x="255.1" y="453.5" width="1" height="160" fill="rgba(255,255,255,0.12)"/>
<text x="255.6" y="629.5" font-size="10.1" fill="#d8d9da" text-anchor="middle" font-weight="normal" >09:10</text>
<rect x="340.6" y="453.5" width="1" height="160" fill="rgba(255,255,255,0.12)"/>
<text x="341.1" y="629.5" font-size="10.1" fill="#d8d9da" text-anchor="middle" font-weight="normal" >09:15</text>
<rect x="426.2" y="453.5" width="1" height="160" fill="rgba(255,255,255,0.12)"/>
<text x="426.7" y="629.5" font-size="10.1" fill="#d8d9da" text-anchor="middle" font-weight="normal" >09:20</text>
<rect x="511.8" y="453.5" width="1" height="160" fill="rgba(255,255,255,0.12)"/>
<text x="512.2" y="629.5" font-size="10.1" fill="#d8d9da" text-anchor="middle" font-weight="normal" >09:25</text>
<rect x="597.3" y="453.5" width="1" height="160" fill="rgba(255,255,255,0.12)"/>
<text x="597.8" y="629.5" font-size="10.1" fill="#d8d9da" text-anchor="middle" font-weight="normal" >09:30</text>
<rect x="682.9" y="453.5" width="1" height="160" fill="rgba(255,255,255,0.12)"/>
<text x="683.4" y="629.5" font-size="10.1" fill="#d8d9da" text-anchor="middle" font-weight="normal" >09:35</text>
<rect x="768.4" y="453.5" width="1" height="160" fill="rgba(255,255,255,0.12)"/>
<text x="768.9" y="629.5" font-size="10.1" fill="#d8d9da" text-anchor="middle" font-weight="normal" >09:40</text>
<rect x="853.9" y="453.5" width="1" height="160" fill="rgba(255,255,255,0.12)"/>
<text x="854.4" y="629.5" font-size="10.1" fill="#d8d9da" text-anchor="middle" font-weight="normal" >09:45</text>
<rect x="939.5" y="453.5" width="1" height="160" fill="rgba(255,255,255,0.12)"/>
<text x="940.0" y="629.5" font-size="10.1" fill="#d8d9da" text-anchor="middle" font-weight="normal" >09:50</text>
<rect x="1025.0" y="453.5" width="1" height="160" fill="rgba(255,255,255,0.12)"/>
<text x="1025.5" y="629.5" font-size="10.1" fill="#d8d9da" text-anchor="middle" font-weight="normal" >09:55</text>
<path d="M34.0,504.9 L34.0,540.0 L51.6,540.0 L51.6,568.8 L68.7,568.8 L68.7,578.4 L85.8,578.4 L85.8,562.4 L102.9,562.4 L102.9,594.3 L120.0,594.3 L120.0,581.5 L137.2,581.5 L137.2,508.1 L154.3,508.1 L154.3,520.8 L171.4,520.8 L171.4,514.5 L188.5,514.5 L188.5,540.0 L205.6,540.0 L205.6,504.9 L222.7,504.9 L222.7,556.0 L239.8,556.0 L239.8,562.4 L256.9,562.4 L256.9,565.6 L274.0,565.6 L274.0,594.3 L291.1,594.3 L291.1,594.3 L308.2,594.3 L308.2,587.9 L325.4,587.9 L325.4,581.5 L342.5,581.5 L342.5,587.9 L359.6,587.9 L359.6,536.8 L376.7,536.8 L376.7,568.8 L393.8,568.8 L393.8,536.8 L410.9,536.8 L410.9,549.6 L428.0,549.6 L428.0,514.5 L445.1,514.5 L445.1,514.5 L462.2,514.5 L462.2,469.7 L479.4,469.7 L479.4,536.8 L496.5,536.8 L496.5,572.0 L513.6,572.0 L513.6,565.6 L530.7,565.6 L530.7,482.5 L547.8,482.5 L547.8,552.8 L564.9,552.8 L564.9,530.4 L582.0,530.4 L582.0,562.4 L599.1,562.4 L599.1,581.5 L616.2,581.5 L616.2,536.8 L633.3,536.8 L633.3,584.7 L650.5,584.7 L650.5,546.4 L667.6,546.4 L667.6,533.6 L684.7,533.6 L684.7,568.8 L701.8,568.8 L701.8,572.0 L718.9,572.0 L718.9,530.4 L736.0,530.4 L736.0,562.4 L753.1,562.4 L753.1,581.5 L770.2,581.5 L770.2,565.6 L787.3,565.6 L787.3,578.4 L804.4,578.4 L804.4,584.7 L821.5,584.7 L821.5,568.8 L838.7,568.8 L838.7,524.0 L855.8,524.0 L855.8,581.5 L872.9,581.5 L872.9,556.0 L890.0,556.0 L890.0,591.1 L907.1,591.1 L907.1,581.5 L924.2,581.5 L924.2,565.6 L941.3,565.6 L941.3,530.4 L958.4,530.4 L958.4,508.1 L975.5,508.1 L975.5,530.4 L992.6,530.4 L992.6,495.3 L1009.8,495.3 L1009.8,549.6 L1026.9,549.6 L1026.9,552.8 L1044.0,552.8 L1044.0,508.1 L1061.0,508.1 L1061,613.5 L34,613.5 Z" fill="#E24D42" fill-opacity="0.2"/>
<path d="M34.0,504.9 L34.0,540.0 L51.6,540.0 L51.6,568.8 L68.7,568.8 L68.7,578.4 L85.8,578.4 L85.8,562.4 L102.9,562.4 L102.9,594.3 L120.0,594.3 L120.0,581.5 L137.2,581.5 L137.2,508.1 L154.3,508.1 L154.3,520.8 L171.4,520.8 L171.4,514.5 L188.5,514.5 L188.5,540.0 L205.6,540.0 L205.6,504.9 L222.7,504.9 L222.7,556.0 L239.8,556.0 L239.8,562.4 L256.9,562.4 L256.9,565.6 L274.0,565.6 L274.0,594.3 L291.1,594.3 L291.1,594.3 L308.2,594.3 L308.2,587.9 L325.4,587.9 L325.4,581.5 L342.5,581.5 L342.5,587.9 L359.6,587.9 L359.6,536.8 L376.7,536.8 L376.7,568.8 L393.8,568.8 L393.8,536.8 L410.9,536.8 L410.9,549.6 L428.0,549.6 L428.0,514.5 L445.1,514.5 L445.1,514.5 L462.2,514.5 L462.2,469.7 L479.4,469.7 L479.4,536.8 L496.5,536.8 L496.5,572.0 L513.6,572.0 L513.6,565.6 L530.7,565.6 L530.7,482.5 L547.8,482.5 L547.8,552.8 L564.9,552.8 L564.9,530.4 L582.0,530.4 L582.0,562.4 L599.1,562.4 L599.1,581.5 L616.2,581.5 L616.2,536.8 L633.3,536.8 L633.3,584.7 L650.5,584.7 L650.5,546.4 L667.6,546.4 L667.6,533.6 L684.7,533.6 L684.7,568.8 L701.8,568.8 L701.8,572.0 L718.9,572.0 L718.9,530.4 L736.0,530.4 L736.0,562.4 L753.1,562.4 L753.1,581.5 L770.2,581.5 L770.2,565.6 L787.3,565.6 L787.3,578.4 L804.4,578.4 L804.4,584.7 L821.5,584.7 L821.5,568.8 L838.7,568.8 L838.7,524.0 L855.8,524.0 L855.8,581.5 L872.9,581.5 L872.9,556.0 L890.0,556.0 L890.0,591.1 L907.1,591.1 L907.1,581.5 L924.2,581.5 L924.2,565.6 L941.3,565.6 L941.3,530.4 L958.4,530.4 L958.4,508.1 L975.5,508.1 L975.5,530.4 L992.6,530.4 L992.6,495.3 L1009.8,495.3 L1009.8,549.6 L1026.9,549.6 L1026.9,552.8 L1044.0,552.8 L1044.0,508.1 L1061.0,508.1" fill="none" stroke="#E24D42" stroke-width="2" stroke-linejoin="round"/>
<path d="M34.0,511.3 L34.0,517.6 L51.6,517.6 L51.6,530.4 L68.7,530.4 L68.7,540.0 L85.8,540.0 L85.8,543.2 L102.9,543.2 L102.9,556.0 L120.0,556.0 L120.0,559.2 L137.2,559.2 L137.2,546.4 L154.3,546.4 L154.3,536.8 L171.4,536.8 L171.4,536.8 L188.5,536.8 L188.5,540.0 L205.6,540.0 L205.6,533.6 L222.7,533.6 L222.7,543.2 L239.8,543.2 L239.8,546.4 L256.9,546.4 L256.9,549.6 L274.0,549.6 L274.0,559.2 L291.1,559.2 L291.1,565.6 L308.2,565.6 L308.2,568.8 L325.4,568.8 L325.4,568.8 L342.5,568.8 L342.5,572.0 L359.6,572.0 L359.6,556.0 L376.7,556.0 L376.7,562.4 L393.8,562.4 L393.8,552.8 L410.9,552.8 L410.9,552.8 L428.0,552.8 L428.0,540.0 L445.1,540.0 L445.1,540.0 L462.2,540.0 L462.2,527.2 L479.4,527.2 L479.4,533.6 L496.5,533.6 L496.5,543.2 L513.6,543.2 L513.6,546.4 L530.7,546.4 L530.7,520.8 L547.8,520.8 L547.8,533.6 L564.9,533.6 L564.9,536.8 L582.0,536.8 L582.0,540.0 L599.1,540.0 L599.1,549.6 L616.2,549.6 L616.2,540.0 L633.3,540.0 L633.3,556.0 L650.5,556.0 L650.5,546.4 L667.6,546.4 L667.6,540.0 L684.7,540.0 L684.7,549.6 L701.8,549.6 L701.8,549.6 L718.9,549.6 L718.9,543.2 L736.0,543.2 L736.0,549.6 L753.1,549.6 L753.1,556.0 L770.2,556.0 L770.2,559.2 L787.3,559.2 L787.3,562.4 L804.4,562.4 L804.4,568.8 L821.5,568.8 L821.5,565.6 L838.7,565.6 L838.7,556.0 L855.8,556.0 L855.8,565.6 L872.9,565.6 L872.9,559.2 L890.0,559.2 L890.0,568.8 L907.1,568.8 L907.1,568.8 L924.2,568.8 L924.2,568.8 L941.3,568.8 L941.3,556.0 L958.4,556.0 L958.4,546.4 L975.5,546.4 L975.5,549.6 L992.6,549.6 L992.6,540.0 L1009.8,540.0 L1009.8,549.6 L1026.9,549.6 L1026.9,549.6 L1044.0,549.6 L1044.0,540.0 L1061.0,540.0 L1061,613.5 L34,613.5 Z" fill="#EF843C" fill-opacity="0.2"/>
<path d="M34.0,511.3 L34.0,517.6 L51.6,517.6 L51.6,530.4 L68.7,530.4 L68.7,540.0 L85.8,540.0 L85.8,543.2 L102.9,543.2 L102.9,556.0 L120.0,556.0 L120.0,559.2 L137.2,559.2 L137.2,546.4 L154.3,546.4 L154.3,536.8 L171.4,536.8 L171.4,536.8 L188.5,536.8 L188.5,540.0 L205.6,540.0 L205.6,533.6 L222.7,533.6 L222.7,543.2 L239.8,543.2 L239.8,546.4 L256.9,546.4 L256.9,549.6 L274.0,549.6 L274.0,559.2 L291.1,559.2 L291.1,565.6 L308.2,565.6 L308.2,568.8 L325.4,568.8 L325.4,568.8 L342.5,568.8 L342.5,572.0 L359.6,572.0 L359.6,556.0 L376.7,556.0 L376.7,562.4 L393.8,562.4 L393.8,552.8 L410.9,552.8 L410.9,552.8 L428.0,552.8 L428.0,540.0 L445.1,540.0 L445.1,540.0 L462.2,540.0 L462.2,527.2 L479.4,527.2 L479.4,533.6 L496.5,533.6 L496.5,543.2 L513.6,543.2 L513.6,546.4 L530.7,546.4 L530.7,520.8 L547.8,520.8 L547.8,533.6 L564.9,533.6 L564.9,536.8 L582.0,536.8 L582.0,540.0 L599.1,540.0 L599.1,549.6 L616.2,549.6 L616.2,540.0 L633.3,540.0 L633.3,556.0 L650.5,556.0 L650.5,546.4 L667.6,546.4 L667.6,540.0 L684.7,540.0 L684.7,549.6 L701.8,549.6 L701.8,549.6 L718.9,549.6 L718.9,543.2 L736.0,543.2 L736.0,549.6 L753.1,549.6 L753.1,556.0 L770.2,556.0 L770.2,559.2 L787.3,559.2 L787.3,562.4 L804.4,562.4 L804.4,568.8 L821.5,568.8 L821.5,565.6 L838.7,565.6 L838.7,556.0 L855.8,556.0 L855.8,565.6 L872.9,565.6 L872.9,559.2 L890.0,559.2 L890.0,568.8 L907.1,568.8 L907.1,568.8 L924.2,568.8 L924.2,568.8 L941.3,568.8 L941.3,556.0 L958.4,556.0 L958.4,546.4 L975.5,546.4 L975.5,549.6 L992.6,549.6 L992.6,540.0 L1009.8,540.0 L1009.8,549.6 L1026.9,549.6 L1026.9,549.6 L1044.0,549.6 L1044.0,540.0 L1061.0,540.0" fill="none" stroke="#EF843C" stroke-width="2" stroke-linejoin="round"/>
<path d="M34.0,524.0 L34.0,527.2 L51.6,527.2 L51.6,530.4 L68.7,530.4 L68.7,533.6 L85.8,533.6 L85.8,536.8 L102.9,536.8 L102.9,543.2 L120.0,543.2 L120.0,543.2 L137.2,543.2 L137.2,540.0 L154.3,540.0 L154.3,536.8 L171.4,536.8 L171.4,536.8 L188.5,536.8 L188.5,540.0 L205.6,540.0 L205.6,536.8 L222.7,536.8 L222.7,540.0 L239.8,540.0 L239.8,543.2 L256.9,543.2 L256.9,543.2 L274.0,543.2 L274.0,546.4 L291.1,546.4 L291.1,549.6 L308.2,549.6 L308.2,549.6 L325.4,549.6 L325.4,549.6 L342.5,549.6 L342.5,552.8 L359.6,552.8 L359.6,546.4 L376.7,546.4 L376.7,549.6 L393.8,549.6 L393.8,546.4 L410.9,546.4 L410.9,546.4 L428.0,546.4 L428.0,543.2 L445.1,543.2 L445.1,540.0 L462.2,540.0 L462.2,536.8 L479.4,536.8 L479.4,540.0 L496.5,540.0 L496.5,543.2 L513.6,543.2 L513.6,543.2 L530.7,543.2 L530.7,533.6 L547.8,533.6 L547.8,536.8 L564.9,536.8 L564.9,536.8 L582.0,536.8 L582.0,540.0 L599.1,540.0 L599.1,543.2 L616.2,543.2 L616.2,540.0 L633.3,540.0 L633.3,543.2 L650.5,543.2 L650.5,543.2 L667.6,543.2 L667.6,540.0 L684.7,540.0 L684.7,543.2 L701.8,543.2 L701.8,543.2 L718.9,543.2 L718.9,540.0 L736.0,540.0 L736.0,543.2 L753.1,543.2 L753.1,543.2 L770.2,543.2 L770.2,546.4 L787.3,546.4 L787.3,546.4 L804.4,546.4 L804.4,549.6 L821.5,549.6 L821.5,549.6 L838.7,549.6 L838.7,546.4 L855.8,546.4 L855.8,549.6 L872.9,549.6 L872.9,549.6 L890.0,549.6 L890.0,552.8 L907.1,552.8 L907.1,552.8 L924.2,552.8 L924.2,552.8 L941.3,552.8 L941.3,549.6 L958.4,549.6 L958.4,546.4 L975.5,546.4 L975.5,546.4 L992.6,546.4 L992.6,543.2 L1009.8,543.2 L1009.8,546.4 L1026.9,546.4 L1026.9,546.4 L1044.0,546.4 L1044.0,543.2 L1061.0,543.2 L1061,613.5 L34,613.5 Z" fill="#E5AC0E" fill-opacity="0.2"/>
<path d="M34.0,524.0 L34.0,527.2 L51.6,527.2 L51.6,530.4 L68.7,530.4 L68.7,533.6 L85.8,533.6 L85.8,536.8 L102.9,536.8 L102.9,543.2 L120.0,543.2 L120.0,543.2 L137.2,543.2 L137.2,540.0 L154.3,540.0 L154.3,536.8 L171.4,536.8 L171.4,536.8 L188.5,536.8 L188.5,540.0 L205.6,540.0 L205.6,536.8 L222.7,536.8 L222.7,540.0 L239.8,540.0 L239.8,543.2 L256.9,543.2 L256.9,543.2 L274.0,543.2 L274.0,546.4 L291.1,546.4 L291.1,549.6 L308.2,549.6 L308.2,549.6 L325.4,549.6 L325.4,549.6 L342.5,549.6 L342.5,552.8 L359.6,552.8 L359.6,546.4 L376.7,546.4 L376.7,549.6 L393.8,549.6 L393.8,546.4 L410.9,546.4 L410.9,546.4 L428.0,546.4 L428.0,543.2 L445.1,543.2 L445.1,540.0 L462.2,540.0 L462.2,536.8 L479.4,536.8 L479.4,540.0 L496.5,540.0 L496.5,543.2 L513.6,543.2 L513.6,543.2 L530.7,543.2 L530.7,533.6 L547.8,533.6 L547.8,536.8 L564.9,536.8 L564.9,536.8 L582.0,536.8 L582.0,540.0 L599.1,540.0 L599.1,543.2 L616.2,543.2 L616.2,540.0 L633.3,540.0 L633.3,543.2 L650.5,543.2 L650.5,543.2 L667.6,543.2 L667.6,540.0 L684.7,540.0 L684.7,543.2 L701.8,543.2 L701.8,543.2 L718.9,543.2 L718.9,540.0 L736.0,540.0 L736.0,543.2 L753.1,543.2 L753.1,543.2 L770.2,543.2 L770.2,546.4 L787.3,546.4 L787.3,546.4 L804.4,546.4 L804.4,549.6 L821.5,549.6 L821.5,549.6 L838.7,549.6 L838.7,546.4 L855.8,546.4 L855.8,549.6 L872.9,549.6 L872.9,549.6 L890.0,549.6 L890.0,552.8 L907.1,552.8 L907.1,552.8 L924.2,552.8 L924.2,552.8 L941.3,552.8 L941.3,549.6 L958.4,549.6 L958.4,546.4 L975.5,546.4 L975.5,546.4 L992.6,546.4 L992.6,543.2 L1009.8,543.2 L1009.8,546.4 L1026.9,546.4 L1026.9,546.4 L1044.0,546.4 L1044.0,543.2 L1061.0,543.2" fill="none" stroke="#E5AC0E" stroke-width="2" stroke-linejoin="round"/>
<text x="1195.8" y="461" font-size="11.3" fill="#33b5e5" text-anchor="end" font-weight="bold" >min</text>
<text x="1237.2" y="461" font-size="11.3" fill="#33b5e5" text-anchor="end" font-weight="bold" >max</text>
<text x="1279" y="461" font-size="11.3" fill="#33b5e5" text-anchor="end" font-weight="bold" >avg</text>
<rect x="1090" y="475.8" width="11.6" height="3.5" fill="#E24D42"/>
<text x="1106.6" y="478.0" font-size="10.6" fill="#d8d9da" text-anchor="start" font-weight="normal" >Load 1m</text>
<text x="1195.8" y="478.0" font-size="10.1" fill="#d8d9da" text-anchor="end" font-weight="normal" >0.06</text>
<text x="1237.2" y="478.0" font-size="10.1" fill="#d8d9da" text-anchor="end" font-weight="normal" >0.45</text>
<text x="1279" y="478.0" font-size="10.1" fill="#d8d9da" text-anchor="end" font-weight="normal" >0.19</text>
<rect x="1090" y="483.8" width="197" height="18" fill="#232121"/>
<rect x="1090" y="493.8" width="11.6" height="3.5" fill="#EF843C"/>
<text x="1106.6" y="496.0" font-size="10.6" fill="#d8d9da" text-anchor="start" font-weight="normal" >Load 5m</text>
<text x="1195.8" y="496.0" font-size="10.1" fill="#d8d9da" text-anchor="end" font-weight="normal" >0.13</text>
<text x="1237.2" y="496.0" font-size="10.1" fill="#d8d9da" text-anchor="end" font-weight="normal" >0.32</text>
<text x="1279" y="496.0" font-size="10.1" fill="#d8d9da" text-anchor="end" font-weight="normal" >0.20</text>
<rect x="1090" y="511.8" width="11.6" height="3.5" fill="#E5AC0E"/>
<text x="1106.6" y="514.0" font-size="10.6" fill="#d8d9da" text-anchor="start" font-weight="normal" >Load 15m</text>
<text x="1195.8" y="514.0" font-size="10.1" fill="#d8d9da" text-anchor="end" font-weight="normal" >0.19</text>
<text x="1237.2" y="514.0" font-size="10.1" fill="#d8d9da" text-anchor="end" font-weight="normal" >0.28</text>
<text x="1279" y="514.0" font-size="10.1" fill="#d8d9da" text-anchor="end" font-weight="normal" >0.22</text>
<rect x="5.5" y="648.5" width="639" height="111" fill="#1f1d1d" stroke="#292727" stroke-width="1"/>
<rect x="654.5" y="648.5" width="639" height="111" fill="#1f1d1d" stroke="#292727" stroke-width="1"/>
<text x="325" y="665" font-size="12.4" fill="#d8d9da" text-anchor="middle" font-weight="bold" >Memory</text>
<text x="974" y="664.9" font-size="12.4" fill="#d8d9da" text-anchor="middle" font-weight="bold" >Memory Distribution</text>
<rect x="50" y="677.8" width="572" height="1" fill="rgba(255,255,255,0.12)"/>
<text x="45.5" y="680.9" font-size="9.8" fill="#d8d9da" text-anchor="end" font-weight="normal" >28 GiB</text>
<rect x="50" y="703.9" width="572" height="1" fill="rgba(255,255,255,0.12)"/>
<text x="45.5" y="707.0" font-size="9.8" fill="#d8d9da" text-anchor="end" font-weight="normal" >23 GiB</text>
<rect x="78.0" y="677" width="1" height="40" fill="rgba(255,255,255,0.12)"/>
<rect x="173.3" y="677" width="1" height="40" fill="rgba(255,255,255,0.12)"/>
<rect x="268.6" y="677" width="1" height="40" fill="rgba(255,255,255,0.12)"/>
<rect x="363.9" y="677" width="1" height="40" fill="rgba(255,255,255,0.12)"/>
<rect x="459.2" y="677" width="1" height="40" fill="rgba(255,255,255,0.12)"/>
<rect x="554.5" y="677" width="1" height="40" fill="rgba(255,255,255,0.12)"/>
<path d="M50,681.8 L50,681.8 L98,681.8 L98,681.5 L116,681.5 L116,681.2 L164,681.2 L164,681.9 L213,681.9 L213,681.4 L240,681.4 L240,681.2 L278,681.2 L278,682.0 L337,682.0 L337,681.6 L355,681.6 L355,681.2 L422,681.2 L422,681.5 L440,681.5 L440,681.3 L468,681.3 L468,681.1 L508,681.1 L508,681.9 L574,681.9 L574,681.1 L622,681.1 L622,720 L50,720 Z" fill="#447EBC" fill-opacity="0.7"/>
<path d="M50,681.8 L50,681.8 L98,681.8 L98,681.5 L116,681.5 L116,681.2 L164,681.2 L164,681.9 L213,681.9 L213,681.4 L240,681.4 L240,681.2 L278,681.2 L278,682.0 L337,682.0 L337,681.6 L355,681.6 L355,681.2 L422,681.2 L422,681.5 L440,681.5 L440,681.3 L468,681.3 L468,681.1 L508,681.1 L508,681.9 L574,681.9 L574,681.1 L622,681.1" fill="none" stroke="#4f95d2" stroke-width="1.8"/>
<rect x="700" y="677.8" width="571" height="1" fill="rgba(255,255,255,0.12)"/>
<text x="695.5" y="680.9" font-size="9.8" fill="#d8d9da" text-anchor="end" font-weight="normal" >37 GiB</text>
<rect x="700" y="703.9" width="571" height="1" fill="rgba(255,255,255,0.12)"/>
<text x="695.5" y="707.0" font-size="9.8" fill="#d8d9da" text-anchor="end" font-weight="normal" >28 GiB</text>
<rect x="727.3" y="677" width="1" height="40" fill="rgba(255,255,255,0.12)"/>
<rect x="822.7" y="677" width="1" height="40" fill="rgba(255,255,255,0.12)"/>
<rect x="918.0" y="677" width="1" height="40" fill="rgba(255,255,255,0.12)"/>
<rect x="1013.4" y="677" width="1" height="40" fill="rgba(255,255,255,0.12)"/>
<rect x="1108.7" y="677" width="1" height="40" fill="rgba(255,255,255,0.12)"/>
<rect x="1204.1" y="677" width="1" height="40" fill="rgba(255,255,255,0.12)"/>
<rect x="700" y="695" width="571" height="8" fill="#9a5a30"/>
<rect x="700" y="694.5" width="571" height="1.6" fill="#EF843C"/>
<rect x="700" y="702.2" width="571" height="1.5" fill="#a8c8a8"/>
<rect x="700" y="703.7" width="571" height="10" fill="#9c7a2e"/>
<rect x="700" y="704.4" width="571" height="1" fill="#a88830"/>
<rect x="727.3" y="694" width="1" height="20" fill="rgba(255,255,255,0.06)"/>
<rect x="822.7" y="694" width="1" height="20" fill="rgba(255,255,255,0.06)"/>
<rect x="918.0" y="694" width="1" height="20" fill="rgba(255,255,255,0.06)"/>
<rect x="1013.4" y="694" width="1" height="20" fill="rgba(255,255,255,0.06)"/>
<rect x="1108.7" y="694" width="1" height="20" fill="rgba(255,255,255,0.06)"/>
<rect x="1204.1" y="694" width="1" height="20" fill="rgba(255,255,255,0.06)"/>
<rect x="0" y="104" width="2.5" height="2.2" fill="#5c5c5c"/>
<rect x="0" y="108.5" width="2.5" height="2.2" fill="#5c5c5c"/>
<rect x="0" y="113" width="2.5" height="2.2" fill="#5c5c5c"/>
<rect x="0" y="653" width="2.5" height="2.2" fill="#5c5c5c"/>
<rect x="0" y="658" width="2.5" height="2.2" fill="#5c5c5c"/>
<rect x="0" y="663" width="2.5" height="2.2" fill="#5c5c5c"/>
<rect x="1303" y="0" width="1" height="200" fill="#0d0d0d"/><rect x="1304" y="0" width="1" height="200" fill="#303030"/></svg></body></html>
